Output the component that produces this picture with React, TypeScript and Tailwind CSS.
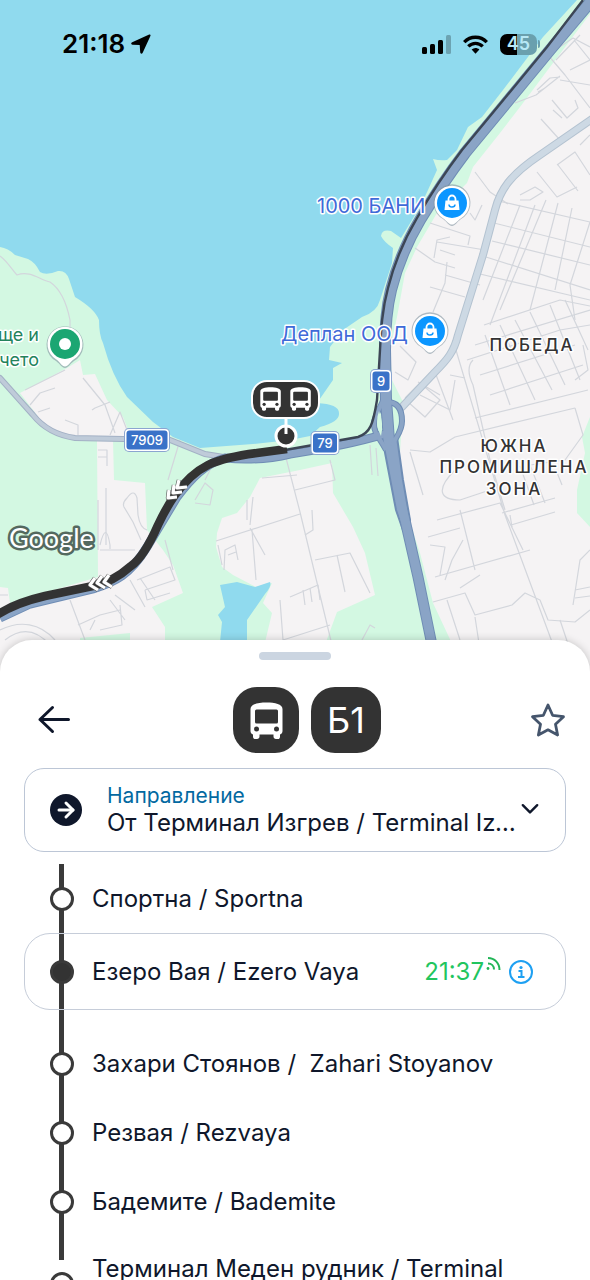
import { useState } from 'react'
import { ArrowRight, ChevronDown } from 'lucide-react'

const directions = [
  'От Терминал Изгрев / Terminal Izgrev',
  'От Терминал Меден рудник / Terminal Meden rudnik',
]

const stops = [
  { name: 'Спортна / Sportna' },
  { name: 'Езеро Вая / Ezero Vaya', time: '21:37', active: true },
  { name: 'Захари Стоянов /  Zahari Stoyanov' },
  { name: 'Резвая / Rezvaya' },
  { name: 'Бадемите / Bademite' },
  { name: 'Терминал Меден рудник / Terminal Meden rudnik', last: true },
]

export default function App() {
  return (
    <div className="flex h-screen flex-col overflow-hidden bg-white font-['Inter',sans-serif] text-slate-900">
      <section className="relative h-[calc(50vh+32px)] shrink-0 overflow-hidden bg-[#90daee]" aria-label="Карта">
        <RouteMap />
        <StatusBar />
      </section>

      <main className="relative -mt-8 flex min-h-0 flex-1 flex-col rounded-t-[32px] bg-white px-6 pt-3 shadow-[0_0_8px_rgba(0,0,0,0.2)]">
        <div className="h-2 w-[72px] shrink-0 self-center rounded-full bg-[#cbd5e1]" />
        <SheetHeader />
        <DirectionSelect />
        <StopList />
      </main>
    </div>
  )
}

function StatusBar() {
  return (
    <div className="relative flex items-center justify-between pt-7 pr-[50px] pl-[62px] text-black">
      <div className="flex items-center gap-1.5 text-[26px] leading-8 font-semibold">
        21:18
        <svg width="20" height="20" viewBox="0 0 20 20" aria-hidden="true">
          <path d="M18.2.6 1.2 8.2C-.3 8.900 0 10.600 1.500 10.700L8.700 11 9.200 18.300C9.300 19.900 11 20.200 11.700 18.700L19.400 2C19.900.9 19.200.1 18.200.6Z" />
        </svg>
      </div>
      <div className="flex items-center gap-3">
        <svg width="29" height="19" viewBox="0 0 29 19" aria-hidden="true">
          <rect x="0" y="12" width="5" height="7" rx="1.500" />
          <rect x="8" y="9" width="5" height="10" rx="1.500" />
          <rect x="16" y="5" width="5" height="14" rx="1.500" />
          <rect x="24" y="0" width="5" height="19" rx="1.500" opacity="0.25" />
        </svg>
        <svg width="25" height="19" viewBox="0 0 25 19" fill="none" stroke="black" strokeWidth="3.400" aria-hidden="true">
          <path d="M1.200 7.200C7.500.6 17.500.6 23.800 7.200" />
          <path d="M5.300 11.400C9.500 7.300 15.500 7.300 19.700 11.400" />
          <path d="M8.600 14.400C11 12.400 14 12.400 16.400 14.400L12.500 18.700Z" fill="black" stroke="none" />
        </svg>
        <div className="flex items-center gap-px">
          <div className="flex h-[21px] w-[37px] items-center justify-center rounded-[7px] bg-linear-to-r from-black from-45% to-[#6aa0ae] to-45% text-lg font-semibold text-[#b8e9f6]">
            45
          </div>
          <div className="h-2 w-0.5 rounded-r bg-[#6aa0ae]" />
        </div>
      </div>
    </div>
  )
}

function SheetHeader() {
  return (
    <header className="flex items-center justify-between pt-[27px] pb-[15px] pl-3">
      <button type="button" aria-label="Назад" className="w-12">
        <svg
          width="36"
          height="36"
          viewBox="0 0 36 36"
          fill="none"
          stroke="currentColor"
          strokeWidth="3"
          strokeLinecap="round"
          strokeLinejoin="round"
          aria-hidden="true"
        >
          <path d="M32.500 17.500H4M16.500 5.500L4 17.500L16.500 29.500" />
        </svg>
      </button>
      <div className="flex gap-3">
        <div className="flex h-[66px] w-[66px] items-center justify-center rounded-3xl bg-[#333]">
          <svg width="33" height="37" viewBox="0 0 33 37" aria-hidden="true">
            <Bus />
          </svg>
        </div>
        <h1 className="flex h-[66px] w-[70px] items-center justify-center rounded-3xl bg-[#333] text-4xl text-white">
          Б1
        </h1>
      </div>
      <button type="button" aria-label="Любими" className="flex w-9 justify-center text-slate-600">
        <svg
          width="36"
          height="36"
          viewBox="0 0 36 36"
          fill="none"
          stroke="currentColor"
          strokeWidth="2.800"
          strokeLinejoin="round"
          aria-hidden="true"
        >
          <path d="M18 3L22.600 13.300L33.500 14.700L25.500 22.300L27.600 33L18 27.800L8.400 33L10.500 22.300L2.500 14.700L13.400 13.300Z" />
        </svg>
      </button>
    </header>
  )
}

function DirectionSelect() {
  const [direction, setDirection] = useState(directions[0])

  return (
    <div className="flex h-[84px] shrink-0 items-center rounded-[20px] border border-[#bcc6d6] pr-[23px] pl-[25px]">
      <span className="flex h-8 w-8 shrink-0 items-center justify-center rounded-full bg-slate-900 text-white">
        <ArrowRight size={24} strokeWidth={3} />
      </span>
      <div className="ml-[25px] flex min-w-0 flex-1 flex-col">
        <label htmlFor="direction" className="text-[21px] leading-[26px] text-[#0369a1]">
          Направление
        </label>
        <select
          id="direction"
          value={direction}
          onChange={(e) => setDirection(e.target.value)}
          className="w-full appearance-none truncate bg-transparent text-2xl leading-7"
        >
          {directions.map((d) => (
            <option key={d}>{d}</option>
          ))}
        </select>
      </div>
      <ChevronDown size={24} strokeWidth={2} viewBox="2 3 20 20" className="pointer-events-none shrink-0" />
    </div>
  )
}

function StopList() {
  return (
    <ul className="mt-3 min-h-0 flex-1 overflow-y-auto [scrollbar-width:none]">
      {stops.map((stop) => (
        <li key={stop.name} className={stop.active ? 'relative pb-[19px]' : 'relative'}>
          {/* Route line behind the stop marker */}
          <span
            className={`absolute top-0 left-[35px] w-[5px] bg-[#3a3a3a] ${stop.last ? 'h-6' : 'h-full'}`}
          />
          <div
            className={`relative flex items-center pl-[25px] ${
              stop.active ? 'h-[77px] rounded-[26px] border border-[#c6cdd9]' : 'ml-px'
            } ${stop.last ? 'h-24' : ''} ${!stop.active && !stop.last ? 'h-[69px]' : ''}`}
          >
            <span
              className={`h-6 w-6 shrink-0 rounded-full border-[3px] border-[#3a3a3a] ${
                stop.active ? 'bg-[#333]' : 'bg-white'
              }`}
            />
            <span className="ml-[18px] flex-1 text-2xl leading-[30px] whitespace-pre-wrap">{stop.name}</span>
            {stop.time && (
              <div className="mr-8 flex items-center">
                <time className="text-2xl text-[#22c55e]">{stop.time}</time>
                <LiveIcon />
                <button type="button" aria-label="Информация" className="ml-[7px]">
                  <InfoIcon />
                </button>
              </div>
            )}
          </div>
        </li>
      ))}
    </ul>
  )
}

function LiveIcon() {
  return (
    <svg
      className="mb-4"
      width="18"
      height="16"
      viewBox="0 0 18 16"
      fill="none"
      stroke="#22b557"
      strokeWidth="2"
      aria-hidden="true"
    >
      <path d="M4 2C10.500 2 15.500 7 15.500 14" />
      <path d="M4 7.500C7.500 7.500 10 10 10 13.500" />
      <circle cx="4" cy="12.500" r="1.400" fill="#22b557" stroke="none" />
    </svg>
  )
}

function InfoIcon() {
  return (
    <svg width="24" height="24" viewBox="0 0 24 24" fill="none" stroke="#1ea0f2" strokeWidth="2" aria-hidden="true">
      <circle cx="12" cy="12" r="11" />
      <path d="M9.500 11H12.500V17M9 17H15.500" />
      <circle cx="12" cy="7.500" r="1.600" fill="#1ea0f2" stroke="none" />
    </svg>
  )
}

// Front view of a bus, 33 x 37
function Bus() {
  return (
    <g>
      <path
        fill="white"
        d="M.5 7C.5 2 8 .5 16.500.5S32.500 2 32.500 7V29C32.500 31 31.500 32 30 32.500V34.500C30 36.500 29 37 28 37H26C24.500 37 23.500 36 23.500 34.500V32.500H9.500V34.500C9.500 36 8.500 37 7 37H5.500C4 37 3 36.500 3 34.500V32.500C1.500 32 .5 31 .5 29Z"
      />
      <rect x="5" y="7.500" width="23" height="14" rx="1.500" fill="#333" />
      <circle cx="6.500" cy="27" r="2.500" fill="#333" />
      <circle cx="26.500" cy="27" r="2.500" fill="#333" />
    </g>
  )
}

function ShopPin({ x, y }: { x: number; y: number }) {
  return (
    <g transform={`translate(${x} ${y})`}>
      <path d="M0 23C-3 23-5 19-9 16A18.500 18.500 0 1 1 9 16C5 19 3 23 0 23Z" fill="#8294a0" opacity="0.6" />
      <path d="M0 21.500C-3 21.500-5 18-9 15.200A17.500 17.500 0 1 1 9 15.200C5 18 3 21.500 0 21.500Z" fill="white" />
      <circle r="15" fill="#0b96ff" />
      <path d="M-6.500-2.500H6.500L7.500 7H-7.500Z" fill="white" />
      <path d="M-3.500-2V-4A3.500 3.500 0 0 1 3.500-4V-2" fill="none" stroke="white" strokeWidth="1.800" />
      <path d="M-3 1.500A3 2.500 0 0 0 3 1.500" fill="none" stroke="#0b96ff" strokeWidth="1.400" />
    </g>
  )
}

function Shield({ x, y, w, label }: { x: number; y: number; w: number; label: string }) {
  return (
    <g>
      <rect x={x - w / 2 - 2} y={y - 12} width={w + 4} height="24" rx="5" fill="#8ba5d0" />
      <rect x={x - w / 2 - 1} y={y - 11} width={w + 2} height="22" rx="4" fill="white" />
      <rect x={x - w / 2 + 0.500} y={y - 9.500} width={w - 1} height="19" rx="3" fill="#3a72c8" />
      <text x={x} y={y + 5} textAnchor="middle" fontSize="13" fontWeight="500" fill="white">
        {label}
      </text>
    </g>
  )
}

function RouteMap() {
  const trunk =
    'M592 0L550 50L503 107L465 153C446 178 432 200 420 220C404 247 396 270 391 290C386 310 385 330 385 350L386 400L389 440'
  const trunkSouth = 'M400 500L405 520L418 577L433 650'
  const arterial = 'M592 119L540 155C510 175 500 190 495 210L483 255L458 335C454 352 447 360 435 372L402 407'
  const south = 'M385 434C365 440 330 448 290 454C265 460 245 460 225 458C205 464 192 477 177 497L147 547C130 575 115 582 93 589L30 604L0 618'
  const ramps = 'M384 398C380 410 374 415 374 424C374 434 380 438 386 450M387 402C398 402 402 410 402 421C402 432 396 436 392 446'
  const chevrons = 'M179 480L177 488L187 487M174 485L173 493L182 492M169 490L168 498L177 497'
  const chevronsWest = 'M109 575L104 582L112 587M102 576L97 583L105 588M95 578L90 585L98 590'
  const streets = [
    // old town grid, Pobeda
    'M494 200L590 222M490 222L590 247M492 241L590 265M486 257L590 290M480 274L590 300',
    'M546 200L500 310M535 205L490 325M520 205L483 300M558 203L530 310M572 208L555 290M590 222L570 285L575 320',
    'M484 325L560 300L590 306M475 345L590 310M467 360L560 330L590 325M480 375L575 345M490 395L583 365M475 418L588 390',
    'M485 335L510 405M500 325L535 400M515 320L552 390M530 312L565 385M550 305L580 380M565 300L588 350',
    'M473 360Q465 368 473 385L490 460M583 345L588 370L575 380',
    // north east
    'M590 108L565 75L548 55M548 55L573 38L590 47M570 70L590 60M560 80L590 85M574 40L590 60M556 60L580 35',
    'M515 103L536 95L560 76M537 90L550 78L560 77M538 92L545 88M552 100L567 118L578 108L575 100M541 119L560 140M590 135L580 145M553 110L562 118',
    'M537 172L557 197L577 187M557 165L575 152L590 175M558 165L578 191M520 195L535 187L543 192L530 200L520 200',
    // west of the arterial
    'M475 172L490 192L508 204M430 223L470 236L468 245M482 205L475 220L470 213M434 258L437 240L450 237M437 242L485 250M440 250L455 255M415 248L435 262L455 268M447 262L445 283L433 312M430 287L465 297M445 275L480 285',
    // around the junction
    'M400 346L416 362L408 380L395 372M405 398L420 383L440 400L425 417L408 402M418 382L440 395M420 395L450 410L455 380M435 372L453 420M410 450L430 452L455 437L575 408M410 452L423 495M450 375L465 378',
    'M453 340L505 515L555 650M455 470C435 490 440 500 460 500L490 490M490 460L505 510M437 520L500 503L523 550M428 537L460 528M460 510L475 570M430 545L445 547L440 575M435 577L530 550M433 602L465 593L475 615L512 605L525 593L540 600L548 620L575 622L590 610',
    'M502 513L555 498M511 525L555 512M510 515L512 527M475 617L480 650M480 575L460 588M573 605L580 560L590 550M575 590L590 587M575 598L590 596M560 620L570 650M445 580L452 560L463 540M447 600L460 640M575 408L583 435L565 460L530 465',
    'M530 465L545 503M520 466L534 505M556 470L562 485',
    // south middle
    'M285 454L300 512L332 645M216 541L300 514M262 478L297 475M253 497L250 525M247 500V520M250 528L265 555M252 530L256 580M224 570L225 550L235 545L238 560M228 555L236 552M218 545L222 565',
    'M295 490L335 480L330 460M312 510L313 530L305 535M315 560L350 553L370 593M337 555L345 592M290 597L318 585L320 600M280 600L283 640L330 625M303 590L305 605M310 588L312 602M362 640L370 625L375 628M370 445L372 475M376 448L378 476',
    // south west
    'M25 390L65 370M30 405L40 393L55 388M38 412L50 408M65 420L78 425V435M83 378L105 405L115 433M92 410L95 408L110 402M110 435L120 412L127 430M98 450H107V466M98 457H107M106 488V545',
    'M141 540L133 522L124 507Q122 503 127 498Q134 488 137 498L138 515Q140 528 147 530M100 550H135M98 500V550M100 545Q106 520 110 545V549M180 440L168 480M195 500L205 483L213 490L210 505L195 503M205 480L210 470',
    'M137 580L170 567L175 580L145 590M145 590L147 600L170 593M70 600L85 640M78 625L100 615L120 610M90 630L95 620M110 600L125 620M115 595L135 610M130 580L145 607M140 578L155 600M0 630C20 620 40 623 55 640M5 640C20 628 35 628 50 645M0 595H8M165 540L173 570M120 605L122 625L100 630',
    'M0 256C8 262 12 270 17 275C30 270 40 280 50 282C62 290 67 305 70 320V332',
  ]

  return (
    <svg
      className="absolute inset-0 h-full w-full font-['Inter',sans-serif]"
      viewBox="0 0 590 672"
      preserveAspectRatio="xMidYMin slice"
      role="img"
      aria-label="Маршрут на автобус Б1"
    >
      {/* Land */}
      <path
        fill="#d3f8e2"
        d="M577 0L543 37L503 90L482 117L468 127L457 150L447 160Q440 161 433 159L437 170L428 190L420 207L401 238L391 231Q382 229 381 236Q384 242 393 248L392 263L380 300Q377 312 362 317L343 330L330 347L329 360L342 363L333 368L333 380L317 403Q339 404 339 413Q340 422 320 427L310 436L290 440L253 444L200 448L173 437L153 422L127 397Q112 376 103 343Q99 335 99 320Q95 309 75 297L69 279Q66 270 58 271Q46 276 40 272Q35 262 28 259L15 255Q8 248 0 247V672H590V0Z"
      />
      <g fill="#f5f3f4">
        <path d="M590 14L550 67L520 107Q510 120 500 133L473 167L467 183L437 213L417 247L405 273L397 317L390 350L392 380L403 402L400 453L405 507L420 553L433 603L455 650V672H590V527L577 513V490L585 453L582 437L590 417Z" />
        <path d="M260 478L300 470L332 463L333 493L353 527L365 553L375 595L337 612L315 672H258L272 613L263 603L272 583L256 587L233 575L222 567L216 547L217 533L222 518L237 513L250 497Z" />
        <path d="M20 393L67 368L80 360L83 375L95 374L107 400L123 417L128 430L127 438H67L43 423Z" />
        <path d="M97 440H113L114 480L145 483L147 530L163 550L173 565L183 593L152 607L165 627V672H0V587L8 588L10 603L98 577Z" />
      </g>
      <path fill="#d3f8e2" d="M80 638L130 633V672H80Z" />
      <path
        fill="#90daee"
        d="M220 585L237 582L255 587L270 582Q272 586 265 594L247 620V672H217L222 622L218 615L225 607Z"
      />

      {/* Streets */}
      <g fill="none" stroke="#d3d6dc" strokeWidth="1.200" strokeLinejoin="round">
        {streets.map((d) => (
          <path key={d} d={d} />
        ))}
      </g>

      {/* Secondary roads */}
      <g fill="none" strokeLinecap="round">
        <path d={arterial} stroke="#b3c2d0" strokeWidth="8" />
        <path d={arterial} stroke="#cdd9e4" strokeWidth="6" />
        <path d="M0 378L33 415Q48 434 75 438L170 440L205 454L230 458" stroke="#a3b1c5" strokeWidth="6" />
        <path d="M0 378L33 415Q48 434 75 438L170 440L205 454L230 458" stroke="#bfcbd9" strokeWidth="4" />
      </g>

      {/* Trunk road and junction */}
      <g fill="none">
        <g stroke="#6f8db5">
          <path d={south} strokeWidth="9" />
          <path d={ramps} strokeWidth="6" />
          <path d={trunkSouth} strokeWidth="11" />
          <path d={trunk} strokeWidth="12" />
          <path d="M382 437H397L403 480L410 520L409 530L403 530L396 510Z" fill="#8aa4c6" strokeWidth="2" />
        </g>
        <g stroke="#8aa4c6">
          <path d={south} strokeWidth="7" />
          <path d={ramps} strokeWidth="4" />
          <path d={trunkSouth} strokeWidth="9" />
          <path d={trunk} strokeWidth="10" />
        </g>
        <path
          d="M583 0L547 47L500 104L462 150C443 175 429 197 417 218C401 245 393 268 388 288C382 310 381 330 380 350L377 400C373 425 370 433 358 437L285 450"
          stroke="#3c4655"
          strokeWidth="2.400"
        />
      </g>
      <path d="M379 411Q374 424 381 436Q384 424 379 411ZM394 409Q401 420 395 434Z" fill="#d3f8e2" />

      {/* Travelled part of the route */}
      <path
        d="M287 449L257 453Q225 457 208 465Q190 474 175 495Q166 508 158 525Q144 557 131 566Q113 582 93 586L45 596Q15 603-3 615"
        fill="none"
        stroke="#333"
        strokeWidth="8.500"
      />
      <g fill="none" strokeLinejoin="round">
        <path d={chevrons} stroke="#555" strokeWidth="4.400" />
        <path d={chevronsWest} stroke="#555" strokeWidth="4.400" />
        <path d={chevrons} stroke="white" strokeWidth="3.200" />
        <path d={chevronsWest} stroke="white" strokeWidth="3.200" />
      </g>

      <Shield x={147} y={440} w={42} label="7909" />
      <Shield x={381} y={381} w={18} label="9" />
      <Shield x={325} y={443} w={25} label="79" />

      {/* Place labels */}
      <g paintOrder="stroke" stroke="white" strokeWidth="3" strokeLinejoin="round">
        <g fontSize="20" fill="#3f6ad8">
          <text x="317" y="213">1000 БАНИ</text>
          <text x="281" y="341">Деплан ООД</text>
        </g>
        <g fontSize="18" fill="#23835c" textAnchor="end">
          <text x="39" y="341">ще и</text>
          <text x="39" y="366">чето</text>
        </g>
        <g fontSize="17" fontWeight="500" fill="#333" textAnchor="middle" letterSpacing="2">
          <text x="532" y="351">ПОБЕДА</text>
          <text x="514" y="452">ЮЖНА</text>
          <text x="514" y="473">ПРОМИШЛЕНА</text>
          <text x="514" y="495">ЗОНА</text>
        </g>
      </g>

      <ShopPin x={452} y={203} />
      <ShopPin x={430} y={331} />

      <g transform="translate(65 344)">
        <path d="M0 24C-3 24-5 20-9 17A18.500 18.500 0 1 1 9 17C5 20 3 24 0 24Z" fill="#8294a0" opacity="0.6" />
        <path d="M0 22.500C-3 22.500-5 18-9 15.200A17.500 17.500 0 1 1 9 15.200C5 18 3 22.500 0 22.500Z" fill="white" />
        <circle r="15" fill="#1ba672" />
        <circle r="6" fill="white" />
      </g>

      {/* Vehicles at the current stop */}
      <rect x="252" y="381" width="67" height="37" rx="15" fill="#333" stroke="white" strokeWidth="2" />
      <g transform="translate(260 387) scale(.64)">
        <Bus />
      </g>
      <g transform="translate(290 387) scale(.64)">
        <Bus />
      </g>
      <circle cx="286" cy="436" r="10" fill="#333" stroke="white" strokeWidth="3" />
      <path d="M286 418V434" stroke="white" strokeWidth="3" />

      <text
        x="9"
        y="548"
        className="font-['Lato',sans-serif]"
        fontSize="27"
        fill="white"
        stroke="#54695f"
        strokeWidth="5"
        strokeLinejoin="round"
        paintOrder="stroke"
      >
        Google
      </text>
    </svg>
  )
}
